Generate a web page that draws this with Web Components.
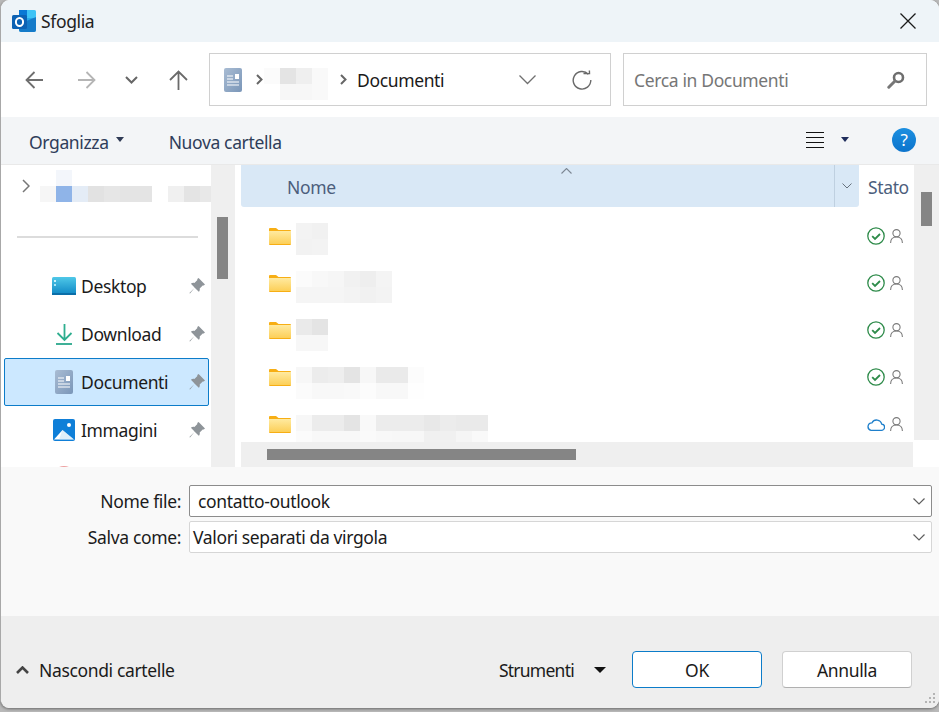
<!DOCTYPE html>
<html lang="it">
<head>
<meta charset="utf-8">
<title>Sfoglia</title>
<style>
  html, body { margin: 0; height: 100%; background: #b9b9b9; overflow: hidden; }
  body { font: 17.5px "Noto Sans", "Open Sans", sans-serif; letter-spacing: -0.36px; color: #1b1b1b; }
</style>
</head>
<body>
<file-dialog>
  <title-bar slot="title">Sfoglia</title-bar>
  <address-bar slot="address"></address-bar>
  <command-bar slot="commands"></command-bar>
  <nav-pane slot="nav">
    <nav-item icon="desktop" label="Desktop"></nav-item>
    <nav-item icon="download" label="Download"></nav-item>
    <nav-item icon="document" label="Documenti" selected></nav-item>
    <nav-item icon="pictures" label="Immagini"></nav-item>
    <nav-item icon="music" label="" plain></nav-item>
  </nav-pane>
  <file-list slot="files">
    <file-row shift="10" status="ok" cells="f3 f1|f2 f3"></file-row>
    <file-row shift="11" status="ok" cells="fb f8 f6 f1 ee f4|f5 f5 f5 f3 f1 f3"></file-row>
    <file-row shift="12" status="ok" cells="ea e4|f7 f7"></file-row>
    <file-row shift="13" status="ok" cells="f7 ec ee e4 f7 ea ea fc|fb f8 f8 f9 fc f8 f8 fe"></file-row>
    <file-row shift="14" status="cloud" cells="f7 ec ec e4 f9 ec ec ec e8 ec ea ea|fb f8 f8 f8 fa f8 f7 f7 f0 f0 f5 f9"></file-row>
  </file-list>
  <save-form slot="form">
    <form-row label="Nome file:" value="contatto-outlook" editable></form-row>
    <form-row label="Salva come:" value="Valori separati da virgola"></form-row>
  </save-form>
  <dialog-footer slot="footer"></dialog-footer>
</file-dialog>

<script>
const ICONS = {
  outlook: `<svg width="24" height="22" viewBox="0 0 24 22"><path fill="#28a8ea" d="M7 0h15a2 2 0 0 1 2 2v18a2 2 0 0 1-2 2H9a2 2 0 0 1-2-2z"/><path fill="#0a78d4" d="M7 0h8v8H7z"/><path fill="#50d9ff" d="M15 0h7a2 2 0 0 1 2 2v6h-9z" opacity=".55"/><path fill="#0f6cbd" d="M12 12l12-5v13a2 2 0 0 1-2 2H9a2 2 0 0 1-2-2v-5z" opacity=".75"/><rect y="5" width="15" height="14" rx="1.5" fill="#0c62b4"/><ellipse cx="7.5" cy="12" rx="3.6" ry="4" fill="none" stroke="#fff" stroke-width="2"/></svg>`,
  back: `<svg width="18" height="18" viewBox="0 0 18 18" fill="none" stroke="#6f6f6f" stroke-width="1.8"><path d="M18 9H1.5M9.5 1L1.5 9l8 8"/></svg>`,
  forward: `<svg width="18" height="18" viewBox="0 0 18 18" fill="none" stroke="#b5b5b5" stroke-width="1.8"><path d="M0 9h16.5M8.5 1l8 8-8 8"/></svg>`,
  recent: `<svg width="13" height="8" viewBox="0 0 13 8" fill="none" stroke="#666" stroke-width="2"><path d="M1 1l5.500 5.500L12 1"/></svg>`,
  up: `<svg width="19" height="20" viewBox="0 0 19 20" fill="none" stroke="#6a6a6a" stroke-width="1.8"><path d="M9.500 20V1.500M1 10l8.500-8.500L18 10"/></svg>`,
  document: `<svg width="18" height="24" viewBox="0 0 18 24"><defs><linearGradient id="d" x1="0" y1="0" x2="1" y2="1"><stop offset="0" stop-color="#a9bcd3"/><stop offset="1" stop-color="#7a96b8"/></linearGradient></defs><rect width="18" height="24" rx="2" fill="url(#d)"/><path stroke="#fff" stroke-width="1.2" d="M3 8h6M3 11h6M3 14h12M3 17h12"/><rect x="11" y="6" width="4" height="5" fill="#fff"/></svg>`,
  crumb: `<svg width="7" height="11" viewBox="0 0 7 11" fill="none" stroke="#666" stroke-width="2"><path d="M1 1l4.500 4.500L1 10"/></svg>`,
  expand: `<svg width="17" height="10" viewBox="0 0 17 10" fill="none" stroke="#707070" stroke-width="1.3"><path d="M.5 .5l8 8 8-8"/></svg>`,
  refresh: `<svg width="20" height="20" viewBox="0 0 20 20" fill="none" stroke="#6a6a6a" stroke-width="1.4"><path d="M16.400 4.200A8.800 8.800 0 1 0 18.800 10"/><path d="M11.500 3.600l6-.1-.1-3"/></svg>`,
  search: `<svg width="18" height="18" viewBox="0 0 18 18"><circle cx="11.500" cy="6.500" r="4.500" fill="none" stroke="#6e6e6e" stroke-width="2.600"/><path d="M8 10L1.800 16.200" stroke="#777" stroke-width="3" stroke-linecap="round"/></svg>`,
  caret: `<svg width="8" height="5" viewBox="0 0 8 5"><path fill="#2f3b55" d="M0 0h8L4 5z"/></svg>`,
  caretNavy: `<svg width="8" height="5" viewBox="0 0 8 5"><path fill="#1f2d5c" d="M0 0h8L4 5z"/></svg>`,
  caretBig: `<svg width="12" height="6" viewBox="0 0 12 6"><path fill="#111" d="M0 0h12L6 6z"/></svg>`,
  views: `<svg width="18" height="16" viewBox="0 0 18 16" stroke="#111" stroke-width="1"><path d="M0 .5h18M0 5.500h18M0 10.500h18M0 15.500h18"/></svg>`,
  chevronRight: `<svg width="8" height="14" viewBox="0 0 8 14" fill="none" stroke="#777" stroke-width="1.500"><path d="M1 1l6 6-6 6"/></svg>`,
  desktop: `<svg width="24" height="18" viewBox="0 0 24 18"><defs><linearGradient id="k" x1="0" y1="0" x2="0" y2="1"><stop offset="0" stop-color="#4fc8e8"/><stop offset="1" stop-color="#0d86c4"/></linearGradient></defs><rect width="24" height="18" rx="1.500" fill="url(#k)"/><rect x="2" y="3" width="2" height="2" fill="#c9f1fb"/><rect x="2" y="7" width="2" height="2" fill="#a9e5f6"/><rect x="0" y="16" width="24" height="2" fill="#0b6ea8"/></svg>`,
  download: `<svg width="17" height="21" viewBox="0 0 17 21" fill="none" stroke="#2fae8f" stroke-width="1.800"><path d="M8.500 0v15.500M1.500 9l7 7 7-7"/><path stroke="#2aa88c" d="M0 20h16"/></svg>`,
  pictures: `<svg width="22" height="22" viewBox="0 0 22 22"><rect width="22" height="22" rx="2" fill="#0f7fd8"/><circle cx="16" cy="6" r="2" fill="#fff"/><path fill="#fff" d="M1 20.500L9.500 11 21 20.500z"/><path fill="#b9dcf5" d="M6 20.500l3.500-9.500L21 20.500z" opacity=".45"/></svg>`,
  music: `<svg width="26" height="26" viewBox="0 0 26 26"><circle cx="13" cy="13" r="13" fill="#eda0a0"/></svg>`,
  pin: `<svg width="16" height="16" viewBox="0 0 16 16"><path fill="#8e9499" d="M9.600 0L16 6.400l-1.300 1.200-1-.2-3 3c.3 1.300 0 2.500-.9 3.400L5.700 9.700 1 15.500l-.6-.5 5.400-5.200-3.900-4c.9-.9 2.200-1.200 3.500-.9l3-3-.2-1z"/></svg>`,
  sortUp: `<svg width="11" height="6" viewBox="0 0 11 6" fill="none" stroke="#7c8794" stroke-width="1.100"><path d="M.5 5.500l5-5 5 5"/></svg>`,
  headDrop: `<svg width="10" height="6" viewBox="0 0 10 6" fill="none" stroke="#67727e" stroke-width="1"><path d="M.5 .5L5 5 9.500 .5"/></svg>`,
  folder: `<svg width="22" height="17" viewBox="0 0 22 17"><defs><linearGradient id="f" x1="0" y1="0" x2="0" y2="1"><stop offset="0" stop-color="#ffeaa0"/><stop offset="1" stop-color="#fccf58"/></linearGradient></defs><path fill="#f7ae14" d="M0 1a1 1 0 0 1 1-1h6l2.500 2H21a1 1 0 0 1 1 1v13a1 1 0 0 1-1 1H1a1 1 0 0 1-1-1z"/><rect y="3" width="22" height="13" fill="url(#f)"/></svg>`,
  ok: `<svg width="18" height="18" viewBox="0 0 18 18" fill="none"><circle cx="9" cy="9" r="8.200" stroke="#2e8b4a" stroke-width="1.300"/><path d="M5.200 9.200l2.800 2.800 5-5" stroke="#2e8b4a" stroke-width="1.800"/></svg>`,
  cloud: `<svg width="18" height="13" viewBox="0 0 18 13" fill="none"><path stroke="#1e7fcb" stroke-width="1.300" d="M4 12.300h10.200a3.100 3.100 0 0 0 .5-6.200A5.200 5.200 0 0 0 5 4.800a3.800 3.800 0 0 0-1 7.500z"/></svg>`,
  person: `<svg width="13" height="14" viewBox="0 0 13 14" fill="none" stroke="#7a7a7a" stroke-width="1.100"><circle cx="6.500" cy="4.200" r="3.600"/><path d="M.6 14c0-3.500 2-6 5.900-6s5.900 2.500 5.900 6"/></svg>`,
  field: `<svg width="12" height="7" viewBox="0 0 12 7" fill="none" stroke="#5f5f5f" stroke-width="1.200"><path d="M.5 .5L6 6l5.500-5.500"/></svg>`,
  hide: `<svg width="13" height="8" viewBox="0 0 13 8" fill="none" stroke="#444" stroke-width="2.600"><path d="M1 7l5.500-5.500L12 7"/></svg>`,
  grip: `<svg width="12" height="12" viewBox="0 0 12 12" fill="#b4b4b4"><rect x="9" y="0" width="2" height="2"/><rect x="5" y="4" width="2" height="2"/><rect x="9" y="4" width="2" height="2"/><rect x="1" y="8" width="2" height="2"/><rect x="5" y="8" width="2" height="2"/><rect x="9" y="8" width="2" height="2"/></svg>`
};

class FileDialog extends HTMLElement {
  constructor() {
    super();
    this.attachShadow({ mode: "open" });
    this.shadowRoot.innerHTML = `
      <style>
        :host { display: flex; flex-direction: column; width: 938px; height: 708px; border-left: 1px solid #a8a8a8;
                border-radius: 9px; overflow: hidden; background: #fff; box-shadow: 0 1px 3px #6a6a6a; }
        .main { display: flex; height: 302px; background: #fff; }
      </style>
      <slot name="title"></slot>
      <slot name="address"></slot>
      <slot name="commands"></slot>
      <div class="main"><slot name="nav"></slot><slot name="files"></slot></div>
      <slot name="form"></slot>
      <slot name="footer"></slot>`;
  }
}

class TitleBar extends HTMLElement {
  constructor() {
    super();
    this.attachShadow({ mode: "open" });
    this.shadowRoot.innerHTML = `
      <style>
        :host { box-sizing: border-box; display: flex; align-items: center; height: 42px; padding: 0 23px 1px 11px; background: #eef4f8; color: #222; }
        .logo { display: flex; margin-right: 5px; }
        .close { margin-left: auto; display: flex; }
      </style>
      <span class="logo">${ICONS.outlook}</span>
      <slot></slot>
      <span class="close"><svg width="16" height="16" viewBox="0 0 16 16" stroke="#1a1a1a" stroke-width="1.300"><path d="M.5 .5l15 15M15.500 .5l-15 15"/></svg></span>`;
  }
}

class AddressBar extends HTMLElement {
  constructor() {
    super();
    this.attachShadow({ mode: "open" });
    this.shadowRoot.innerHTML = `
      <style>
        :host { display: flex; align-items: center; height: 75px; padding-left: 24px; background: #fff; }
        .nav { display: flex; align-items: center; }
        .nav span { display: flex; }
        .box { box-sizing: border-box; height: 53px; border: 1px solid #d0d0d0; display: flex; align-items: center; background: #fff; }
        .path { width: 402px; margin-left: 21px; padding-left: 14px; }
        .path b { font-weight: 400; color: #1a1a1a; }
        .find { width: 304px; margin-left: 12px; padding-left: 10px; color: #767676; }
        .find span { margin-left: auto; margin-right: 21px; display: flex; }
      </style>
      <div class="nav">
        <span>${ICONS.back}</span>
        <span style="margin-left:35px">${ICONS.forward}</span>
        <span style="margin-left:29px">${ICONS.recent}</span>
        <span style="margin-left:31px">${ICONS.up}</span>
      </div>
      <div class="box path">
        ${ICONS.document}
        <span style="display:flex;margin-left:14px">${ICONS.crumb}</span>
        <pixel-blur cells="fb e4 ef f9|ff f7 f7 f9" style="margin-left:1px;margin-top:8px"></pixel-blur>
        <span style="display:flex;margin-left:12px">${ICONS.crumb}</span>
        <b style="margin-left:10px">Documenti</b>
        <span style="display:flex;margin-left:auto">${ICONS.expand}</span>
        <span style="display:flex;margin:0 18px 0 36px">${ICONS.refresh}</span>
      </div>
      <div class="box find">Cerca in Documenti<span>${ICONS.search}</span></div>`;
  }
}

class CommandBar extends HTMLElement {
  constructor() {
    super();
    this.attachShadow({ mode: "open" });
    this.shadowRoot.innerHTML = `
      <style>
        :host { box-sizing: border-box; display: flex; align-items: center; height: 48px; padding: 0 23px 2px 28px;
                background: #f3f5f7; border-bottom: 1px solid #e9e9e9; color: #2f3d5a; }
        span { display: flex; }
        .label { padding-top: 4px; }
        .right { margin-left: auto; display: flex; align-items: center; }
        .help { width: 24px; height: 24px; border-radius: 50%; background: linear-gradient(#1c8fe0, #0c74cc); color: #fff;
                align-items: center; justify-content: center; font-size: 17px; margin-left: 43px; }
      </style>
      <span class="label">Organizza</span><span style="margin-left:7px">${ICONS.caret}</span>
      <span class="label" style="margin-left:45px">Nuova cartella</span>
      <div class="right">
        <span>${ICONS.views}</span>
        <span style="margin-left:17px">${ICONS.caretNavy}</span>
        <span class="help">?</span>
      </div>`;
  }
}

class PixelBlur extends HTMLElement {
  connectedCallback() {
    if (this.shadowRoot) return;
    this.attachShadow({ mode: "open" });
    const rows = this.getAttribute("cells").split("|").map((r) => r.split(" "));
    const cols = rows[0].length;
    const cells = rows.flat().map((c) => `<i style="background:#${c.length === 2 ? c + c + c : c}"></i>`).join("");
    this.shadowRoot.innerHTML = `
      <style>
        :host { display: grid; grid-template-columns: repeat(${cols}, 16px); grid-auto-rows: 16px; flex: none; }
      </style>${cells}`;
  }
}

class ScrollBar extends HTMLElement {
  connectedCallback() {
    if (this.shadowRoot) return;
    this.attachShadow({ mode: "open" });
    const horizontal = this.hasAttribute("horizontal");
    const offset = this.getAttribute("offset");
    const size = this.getAttribute("size");
    this.shadowRoot.innerHTML = `
      <style>
        :host { display: block; background: #efefef; }
        div { background: #858585;
              ${horizontal
                ? `height: 11px; width: ${size}px; margin: 7px 0 0 ${offset}px;`
                : `width: 11px; height: ${size}px; margin: ${offset}px 0 0 ${this.getAttribute("inset")}px;`} }
      </style>
      <div></div>`;
  }
}

class NavPane extends HTMLElement {
  constructor() {
    super();
    this.attachShadow({ mode: "open" });
    this.shadowRoot.innerHTML = `
      <style>
        :host { display: flex; flex: none; width: 240px; height: 302px; }
        .pane { width: 210px; height: 302px; overflow: hidden; box-sizing: border-box; padding-top: 5px; }
        .tree { display: flex; align-items: center; height: 32px; padding-left: 21px; }
        .tree pixel-blur { margin-left: 10px; }
        hr { border: 0; height: 2px; background: #dcdcdc; margin: 34px 13px 24px 16px; }
        scroll-bar { width: 24px; height: 302px; }
        .items { display: flex; flex-direction: column; }
      </style>
      <div class="pane">
        <div class="tree">
          <span style="display:flex">${ICONS.chevronRight}</span>
          <pixel-blur cells="ff f3f6fb ff ff ff ff ff ff ff ff ff|f6f6f6 8fb4e8 e4ecf6 e2e2e2 e6e6e6 e4e4e4 e4e4e4 ff f0f0f0 e4e4e4 e8e8e8"></pixel-blur>
        </div>
        <hr>
        <div class="items"><slot></slot></div>
      </div>
      <scroll-bar inset="6" offset="52" size="62"></scroll-bar>`;
  }
}

class NavItem extends HTMLElement {
  connectedCallback() {
    if (this.shadowRoot) return;
    this.attachShadow({ mode: "open" });
    const pin = this.hasAttribute("plain") ? "" : ICONS.pin;
    this.shadowRoot.innerHTML = `
      <style>
        :host { box-sizing: border-box; display: grid; grid-template-columns: 71px 1fr 16px; align-items: center; flex: none;
                height: 48px; margin: 0 2px 0 3px; padding-right: 3px; border: 1px solid transparent; border-radius: 2px; }
        :host([selected]) { background: #cce8ff; border-color: #0c7cc9; }
        .icon { display: flex; justify-content: center; padding-left: 47px; }
        .text { padding-left: 5px; }
        .pin { display: flex; }
      </style>
      <span class="icon">${ICONS[this.getAttribute("icon")]}</span>
      <span class="text">${this.getAttribute("label")}</span>
      <span class="pin">${pin}</span>`;
  }
}

class FileList extends HTMLElement {
  constructor() {
    super();
    this.attachShadow({ mode: "open" });
    this.shadowRoot.innerHTML = `
      <style>
        :host { display: grid; grid-template-columns: 672px 1px 25px; grid-template-rows: 277px 25px; width: 698px; }
        .list { grid-column: 1 / 3; overflow: hidden; position: relative; }
        .head { display: flex; height: 42px; color: #4c5e7c; }
        .name { box-sizing: border-box; position: relative; display: flex; align-items: center; width: 618px; height: 42px; padding: 2px 0 0 46px;
                background: #d9e8f6; border-radius: 0 0 3px 3px; }
        .sort { position: absolute; left: 320px; top: 3px; display: flex; }
        .drop { position: absolute; right: 0; top: 0; width: 25px; height: 42px; box-sizing: border-box; border-left: 1px solid #bfd0e0;
                display: flex; align-items: center; justify-content: center; }
        .stato { padding: 2px 0 0 9px; display: flex; align-items: center; }
        .rows { padding-top: 6px; }
        .vert { grid-column: 3; grid-row: 1; height: 275px; }
        .horiz { grid-column: 1; grid-row: 2; }
      </style>
      <div class="list">
        <div class="head">
          <div class="name">Nome<span class="sort">${ICONS.sortUp}</span><span class="drop">${ICONS.headDrop}</span></div>
          <div class="stato">Stato</div>
        </div>
        <div class="rows"><slot></slot></div>
      </div>
      <scroll-bar class="vert" inset="7" offset="27" size="34"></scroll-bar>
      <scroll-bar class="horiz" horizontal offset="26" size="309"></scroll-bar>`;
  }
}

class FileRow extends HTMLElement {
  connectedCallback() {
    if (this.shadowRoot) return;
    this.attachShadow({ mode: "open" });
    const status = this.getAttribute("status");
    this.shadowRoot.innerHTML = `
      <style>
        :host { display: flex; align-items: center; height: 47px; padding: 0 11px 0 28px; }
        span { display: flex; }
        pixel-blur { align-self: flex-start; margin: ${this.getAttribute("shift")}px 0 0 5px; }
        .status { margin-left: auto; align-items: center; gap: 5px; margin-top: -1px; }
      </style>
      <span>${ICONS.folder}</span>
      <pixel-blur cells="${this.getAttribute("cells")}"></pixel-blur>
      <span class="status">${ICONS[status]}${ICONS.person}</span>`;
  }
}

class SaveForm extends HTMLElement {
  constructor() {
    super();
    this.attachShadow({ mode: "open" });
    this.shadowRoot.innerHTML = `
      <style>
        :host { box-sizing: border-box; display: flex; flex-direction: column; gap: 4px; height: 149px; padding: 18px 7px 0 0; background: #f9f9f9; }
      </style>
      <slot></slot>`;
  }
}

class FormRow extends HTMLElement {
  connectedCallback() {
    if (this.shadowRoot) return;
    this.attachShadow({ mode: "open" });
    this.shadowRoot.innerHTML = `
      <style>
        :host { display: grid; grid-template-columns: 180px 1fr; column-gap: 8px; align-items: center; height: 32px; }
        label { text-align: right; }
        .field { box-sizing: border-box; display: flex; align-items: center; height: 32px; padding: 0 6px 0 3px; background: #fff;
                 border: 1px solid #d6d6d6; border-radius: 2px; }
        :host([editable]) .field { padding-left: 8px; border-color: #8c8c8c; }
        .field span { margin-left: auto; display: flex; }
      </style>
      <label>${this.getAttribute("label")}</label>
      <div class="field">${this.getAttribute("value")}<span>${ICONS.field}</span></div>`;
  }
}

class DialogButton extends HTMLElement {
  constructor() {
    super();
    this.attachShadow({ mode: "open" });
    this.shadowRoot.innerHTML = `
      <style>
        :host { box-sizing: border-box; display: flex; align-items: center; justify-content: center; width: 130px; height: 37px;
                background: #fff; border: 1px solid #d0d0d0; border-bottom-color: #b0b0b0; border-radius: 4px; }
        :host([primary]) { border-color: #0c7cc9; }
      </style>
      <slot></slot>`;
  }
}

class DialogFooter extends HTMLElement {
  constructor() {
    super();
    this.attachShadow({ mode: "open" });
    this.shadowRoot.innerHTML = `
      <style>
        :host { box-sizing: border-box; position: relative; display: flex; align-items: center; height: 92px; padding: 35px 27px 20px 15px; background: #eeeeee; }
        span { display: flex; }
        .tools { margin-left: auto; letter-spacing: -0.75px; }
        .grip { position: absolute; right: 3px; bottom: 3px; }
      </style>
      <span>${ICONS.hide}</span>
      <span style="margin-left:10px">Nascondi cartelle</span>
      <span class="tools">Strumenti</span>
      <span style="margin:0 26px 0 20px">${ICONS.caretBig}</span>
      <dialog-button primary>OK</dialog-button>
      <dialog-button style="margin-left:20px">Annulla</dialog-button>
      <span class="grip">${ICONS.grip}</span>`;
  }
}

customElements.define("pixel-blur", PixelBlur);
customElements.define("scroll-bar", ScrollBar);
customElements.define("dialog-button", DialogButton);
customElements.define("title-bar", TitleBar);
customElements.define("address-bar", AddressBar);
customElements.define("command-bar", CommandBar);
customElements.define("nav-pane", NavPane);
customElements.define("nav-item", NavItem);
customElements.define("file-list", FileList);
customElements.define("file-row", FileRow);
customElements.define("save-form", SaveForm);
customElements.define("form-row", FormRow);
customElements.define("dialog-footer", DialogFooter);
customElements.define("file-dialog", FileDialog);
</script>
</body>
</html>
